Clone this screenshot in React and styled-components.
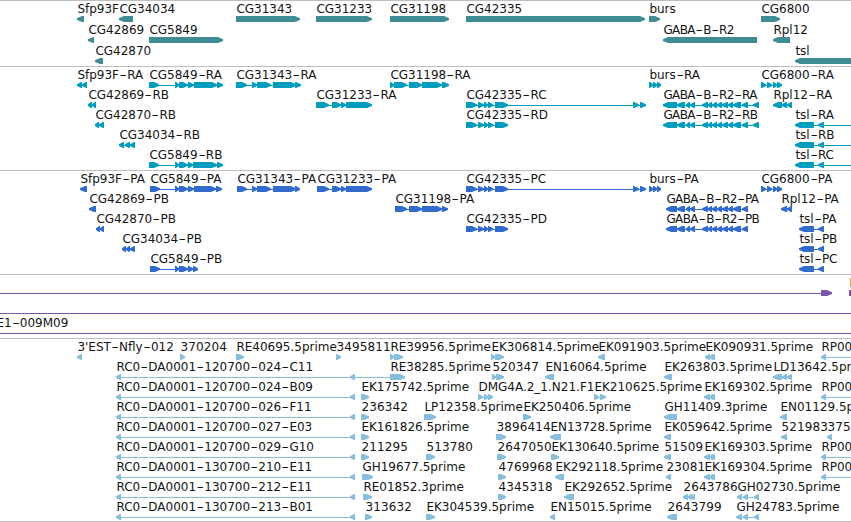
import React from 'react'
import styled, { createGlobalStyle } from 'styled-components'

const GlobalStyle = createGlobalStyle`
    body {
        margin: 0;
        background: #fff;
    }
`

const Browser = styled.div`
    width: 851px;
    height: 522px;
    overflow: hidden;
    display: flex;
    flex-direction: column;
    background: #fff;
    color: #000;
    font-family: 'DejaVu Sans', sans-serif;
    font-size: 12px;
`

const Track = styled.section`
    box-sizing: border-box;
    flex: 0 0 ${(props) => props.$height}px;
    display: flex;
    flex-direction: column;
    padding-top: 1px;
    border-top: 1px solid #bebebe;
    color: ${(props) => props.$color};
`

const Row = styled.div`
    position: relative;
    flex: 0 0 ${(props) => props.$height}px;
`

// features sit at their genomic coordinate on the row
const Feature = styled.div`
    position: absolute;
    top: 0;
    display: flex;
    flex-direction: column;
`

const Label = styled.span`
    height: 14px;
    line-height: 14px;
    padding-left: 0.4px;
    color: #141414;
    white-space: pre;
    letter-spacing: ${(props) => props.$spacing}px;
`

const Dash = styled.span`
    display: inline-block;
    width: 8.2px;
    text-align: center;
    letter-spacing: 0;
    transform: scaleX(1.7);
`

const Glyph = styled.svg`
    display: block;
    overflow: visible;
`

const Footer = styled.div`
    flex: 0 0 1px;
    background: #bebebe;
`

const exonPath = ([start, end], dir, origin) => {
    const s = start - origin
    const e = end - origin
    const head = Math.min(6, e - s) - 1
    if (dir === '>') {
        return `M${s} 0H${e - head}L${e} 2.2V4L${e - head} 6H${s}Z`
    }
    return `M${e} 0H${s + head}L${s} 2.2V4L${s + head} 6H${e}Z`
}

const spacingFor = (name) => {
    if (/^GABA/.test(name)) return -0.6
    if (/^\d+$/.test(name)) return 0.15
    return 0
}

const FeatureItem = ({ item }) => {
    const [x, name, dir, exons, lineEnd] = item
    const end = lineEnd || exons[exons.length - 1][1]
    return (
        <Feature style={{ left: x }}>
            <Label $spacing={spacingFor(name)}>
                {name.split('-').map((part, i) => (
                    <React.Fragment key={i}>
                        {i > 0 && <Dash>-</Dash>}
                        {part}
                    </React.Fragment>
                ))}
            </Label>
            <Glyph width={end - x} height="6">
                {(exons.length !== 1 || lineEnd) && (
                    <rect x="1" y="3" width={end - x - 2} height="1" fill="currentColor" />
                )}
                {exons.map((exon) => (
                    <path key={exon[0]} d={exonPath(exon, dir, x)} fill="currentColor" />
                ))}
            </Glyph>
        </Feature>
    )
}

const one = (x, name, dir, end) => [x, name, dir, [[x, end]]]

const genes = [
    [
        one(77, 'Sfp93F', '<', 84),
        one(119, 'CG34034', '<', 133),
        one(236, 'CG31343', '>', 300),
        one(316, 'CG31233', '>', 372),
        one(390, 'CG31198', '>', 449),
        one(466, 'CG42335', '>', 645),
        one(649, 'burs', '>', 660),
        one(761, 'CG6800', '>', 780),
    ],
    [
        one(88, 'CG42869', '<', 94),
        one(149, 'CG5849', '>', 223),
        one(663, 'GABA-B-R2', '<', 757),
        one(773, 'Rpl12', '<', 790),
    ],
    [one(95, 'CG42870', '<', 103), one(795, 'tsl', '<', 870)],
]

const cg31343 = [[252, 257], [257, 271], [273, 296]]
const cg31233 = [[332, 341], [341, 346], [346, 372]]
const cg31198 = [[409, 422], [422, 442]]
const cg42335 = [[466, 477], [478, 484], [484, 488], [488, 493], [495, 508]]
const cg42335Long = [...cg42335, [633, 639], [640, 646]]
const burs = [[649, 653], [653, 657], [657, 661]]
const cg6800 = [[761, 766], [767, 772], [773, 777], [777, 782]]
const gaba = [
    [677, 685], [686, 690], [690, 695], [702, 708], [708, 712], [712, 717],
    [717, 722], [722, 728], [728, 733], [733, 741], [742, 748],
]
const gabaR = [[663, 677], ...gaba, [753, 759]]
const gabaP = [[666, 677], ...gaba]
const tslR = [[795, 814], [818, 824]]
const tslP = [[799, 814], [818, 824]]

const transcripts = [
    [
        [77, 'Sfp93F-RA', '<', [[77, 82], [82, 87]]],
        [149, 'CG5849-RA', '>', [[149, 159], [175, 179], [179, 188], [188, 194], [194, 217], [217, 223]]],
        [236, 'CG31343-RA', '>', [[236, 247], ...cg31343, [295, 301]]],
        [390, 'CG31198-RA', '>', [[390, 394], [394, 407], ...cg31198, [442, 449]]],
        [649, 'burs-RA', '>', burs],
        [761, 'CG6800-RA', '>', cg6800],
    ],
    [
        [88, 'CG42869-RB', '<', [[88, 92], [92, 96]]],
        [316, 'CG31233-RA', '>', [[316, 329], ...cg31233]],
        [466, 'CG42335-RC', '>', cg42335Long],
        [663, 'GABA-B-R2-RA', '<', gabaR],
        [773, 'Rpl12-RA', '<', [[773, 782], [782, 787], [787, 792]]],
    ],
    [
        [95, 'CG42870-RB', '<', [[95, 99], [99, 104]]],
        [466, 'CG42335-RD', '>', cg42335],
        [663, 'GABA-B-R2-RB', '<', gabaR],
        [795, 'tsl-RA', '<', tslR, 870],
    ],
    [
        [119, 'CG34034-RB', '<', [[119, 124], [125, 130], [130, 135]]],
        [795, 'tsl-RB', '<', tslR, 870],
    ],
    [
        [149, 'CG5849-RB', '>', [[149, 159], [175, 179], [179, 188], [188, 193], [193, 217], [217, 223]]],
        [795, 'tsl-RC', '<', tslR, 870],
    ],
]

const proteins = [
    [
        one(80, 'Sfp93F-PA', '<', 87),
        [150, 'CG5849-PA', '>', [[150, 160], [175, 179], [179, 188], [188, 194], [194, 216], [216, 222]]],
        [237, 'CG31343-PA', '>', [[237, 247], ...cg31343, [295, 300]]],
        [317, 'CG31233-PA', '>', [[317, 329], ...cg31233]],
        [466, 'CG42335-PC', '>', cg42335Long],
        [649, 'burs-PA', '>', burs],
        [761, 'CG6800-PA', '>', cg6800],
    ],
    [
        one(89, 'CG42869-PB', '<', 96),
        [395, 'CG31198-PA', '>', [[395, 407], ...cg31198, [442, 448]]],
        [666, 'GABA-B-R2-PA', '<', gabaP],
        [781, 'Rpl12-PA', '<', [[781, 787], [787, 792]]],
    ],
    [
        [96, 'CG42870-PB', '<', [[96, 100], [100, 104]]],
        [466, 'CG42335-PD', '>', cg42335],
        [666, 'GABA-B-R2-PB', '<', gabaP],
        [799, 'tsl-PA', '<', tslP],
    ],
    [
        [122, 'CG34034-PB', '<', [[122, 126], [126, 130], [130, 135]]],
        [799, 'tsl-PB', '<', tslP],
    ],
    [
        [150, 'CG5849-PB', '>', [[150, 160], [175, 179], [179, 188], [188, 193], [193, 198]]],
        [799, 'tsl-PC', '<', tslP],
    ],
]

const clones = [
    [
        [-4, '', '>', [[821, 832]], 832],
        one(849, 'E', '>', 870),
    ],
    [[-4, '', '>', [], 870]],
    [[-4, 'E1-009M09', '>', [], 870]],
]

const rc0 = (name) => [116, 'RC0-DA0001-' + name, '<', [[116, 121], [350, 355]]]
const rp = [821, 'RP00', '<', [[821, 826]], 870]
const ek = (name) => [704, name, '<', [[704, 710], [710, 713], [712, 715]]]

const ests = [
    [
        one(77, "3'EST-Nfly-012", '<', 82),
        one(180, '370204', '>', 185),
        one(236, 'RE40695.5prime', '>', 244),
        one(336, '3495811', '>', 341),
        [390, 'RE39956.5prime', '>', [[390, 394], [394, 403]]],
        [491, 'EK306814.5prime', '>', [[491, 495], [495, 504]]],
        one(598, 'EK091903.5prime', '<', 605),
        [705, 'EK090931.5prime', '<', [[705, 710], [710, 713], [712, 715]]],
        rp,
    ],
    [
        [116, 'RC0-DA0001-120700-024-C11', '<', [[116, 121], [350, 355]], 392],
        one(390, 'RE38285.5prime', '>', 405),
        [492, '520347', '>', [[492, 496], [496, 504]]],
        one(545, 'EN16064.5prime', '<', 554),
        one(664, 'EK263803.5prime', '<', 672),
        [773, 'LD13642.5prime', '<', [[773, 782], [782, 787], [787, 792]]],
    ],
    [
        rc0('120700-024-B09'),
        one(361, 'EK175742.5prime', '>', 369),
        [478, 'DMG4A.2_1.N21.F1', '>', [[478, 483], [484, 488], [488, 493]]],
        [594, 'EK210625.5prime', '>', [[594, 599], [600, 606]]],
        ek('EK169302.5prime'),
        rp,
    ],
    [
        rc0('120700-026-F11'),
        one(361, '236342', '>', 369),
        one(424, 'LP12358.5prime', '>', 436),
        one(523, 'EK250406.5prime', '>', 531),
        one(664, 'GH11409.3prime', '<', 677),
        one(780, 'EN01129.5prime', '<', 787),
    ],
    [
        rc0('120700-027-E03'),
        one(361, 'EK161826.5prime', '>', 369),
        one(496, '3896414', '>', 506),
        one(550, 'EN13728.5prime', '<', 561),
        one(664, 'EK059642.5prime', '<', 671),
        one(781, '521983', '<', 787),
        one(827, '375', '<', 832),
    ],
    [
        rc0('120700-029-G10'),
        one(361, '211295', '>', 369),
        one(426, '513780', '>', 435),
        one(497, '2647050', '>', 506),
        one(551, 'EK130640.5prime', '>', 559),
        one(664, '51509', '<', 671),
        ek('EK169303.5prime'),
        rp,
    ],
    [
        rc0('130700-210-E11'),
        one(362, 'GH19677.5prime', '>', 373),
        one(498, '4769968', '>', 506),
        one(555, 'EK292118.5prime', '<', 564),
        one(666, '23081', '<', 671),
        ek('EK169304.5prime'),
        rp,
    ],
    [
        rc0('130700-212-E11'),
        one(363, 'RE01852.3prime', '>', 372),
        one(498, '4345318', '>', 506),
        one(564, 'EK292652.5prime', '<', 574),
        [683, '2643786', '<', [[683, 688], [688, 692], [691, 695]]],
        [737, 'GH02730.5prime', '<', [[737, 742], [743, 748], [754, 759]]],
    ],
    [
        rc0('130700-213-B01'),
        one(365, '313632', '>', 372),
        one(426, 'EK304539.5prime', '>', 435),
        one(550, 'EN15015.5prime', '<', 555),
        one(667, '2643799', '<', 677),
        [736, 'GH24783.5prime', '<', [[736, 742], [743, 748], [754, 759]]],
    ],
]

const tracks = [
    { id: 'genes', rows: genes, color: '#408c94', height: 66, rowHeight: 21 },
    { id: 'transcripts', rows: transcripts, color: '#009dbf', height: 104, rowHeight: 20 },
    { id: 'proteins', rows: proteins, color: '#316bcd', height: 104, rowHeight: 20 },
    { id: 'clones', rows: clones, color: '#7856a9', height: 64, rowHeight: 20 },
    { id: 'ests', rows: ests, color: '#87bddd', height: 183, rowHeight: 20 },
]

const App = () => (
    <React.Fragment>
        <GlobalStyle />
        <Browser>
            {tracks.map((track) => (
                <Track key={track.id} $height={track.height} $color={track.color}>
                    {track.rows.map((row, i) => (
                        <Row key={i} $height={track.rowHeight}>
                            {row.map((item) => (
                                <FeatureItem key={item[0] + item[1]} item={item} />
                            ))}
                        </Row>
                    ))}
                </Track>
            ))}
            <Footer />
        </Browser>
    </React.Fragment>
)

export default App
